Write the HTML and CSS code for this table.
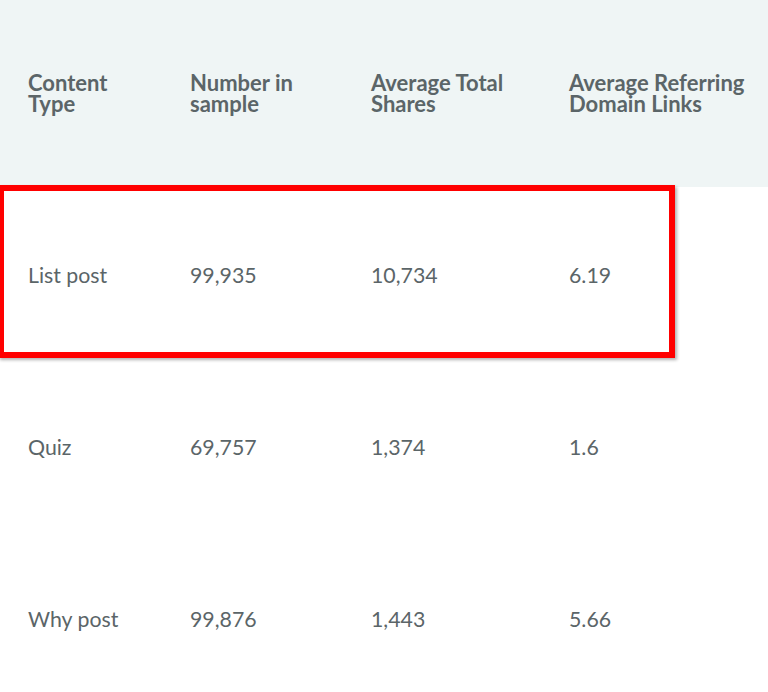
FILE: index.html
```html
<!DOCTYPE html>
<html lang="en">
<head>
<meta charset="utf-8">
<title>Content type table</title>
<link rel="stylesheet" href="styles.css">
</head>
<body>
<div class="wrap">
  <div class="table">
    <div class="row head">
      <div class="cell">Content<br>Type</div>
      <div class="cell">Number in<br>sample</div>
      <div class="cell">Average Total<br>Shares</div>
      <div class="cell">Average Referring<br>Domain Links</div>
    </div>
    <div class="row body">
      <div class="cell">List post</div>
      <div class="cell">99,935</div>
      <div class="cell">10,734</div>
      <div class="cell">6.19</div>
    </div>
    <div class="row body">
      <div class="cell">Quiz</div>
      <div class="cell">69,757</div>
      <div class="cell">1,374</div>
      <div class="cell">1.6</div>
    </div>
    <div class="row body">
      <div class="cell">Why post</div>
      <div class="cell">99,876</div>
      <div class="cell">1,443</div>
      <div class="cell">5.66</div>
    </div>
  </div>
  <div class="highlight"></div>
</div>
</body>
</html>
```
FILE: styles.css
```css
html, body {
  margin: 0;
  padding: 0;
  background: #ffffff;
}
body {
  font-family: Lato, "Open Sans", sans-serif;
  color: #5b6568;
  overflow: hidden;
}
.wrap {
  position: relative;
  width: 768px;
  height: 692px;
}
.table {
  display: flex;
  flex-direction: column;
}
.row {
  display: grid;
  grid-template-columns: 162px 181px 198px 1fr;
  align-items: center;
}
.cell {
  padding-left: 28px;
  white-space: nowrap;
}
.head {
  height: 187px;
  background: #eff5f5;
}
.head .cell {
  font-size: 22px;
  font-weight: 700;
  line-height: 21px;
  padding-bottom: 2px;
}
.body {
  height: 172px;
}
.body .cell {
  font-size: 21.3px;
  line-height: 28px;
  padding-top: 4px;
}
.highlight {
  position: absolute;
  left: -2px;
  top: 185px;
  width: 665px;
  height: 161px;
  border: 6px solid #ff0000;
  box-shadow: 2px 2px 3px rgba(0, 0, 0, 0.3);
}
```
